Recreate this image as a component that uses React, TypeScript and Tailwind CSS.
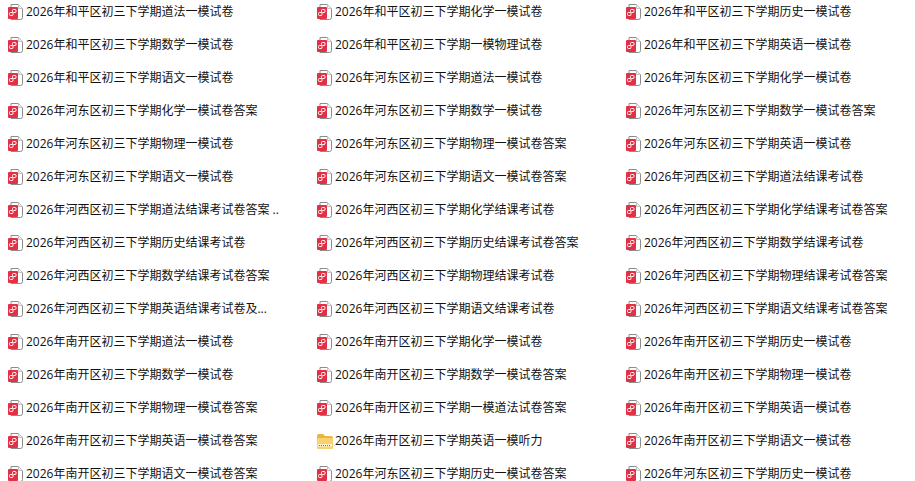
const rows: string[][] = [
  ["2026年和平区初三下学期道法一模试卷", "2026年和平区初三下学期化学一模试卷", "2026年和平区初三下学期历史一模试卷"],
  ["2026年和平区初三下学期数学一模试卷", "2026年和平区初三下学期一模物理试卷", "2026年和平区初三下学期英语一模试卷"],
  ["2026年和平区初三下学期语文一模试卷", "2026年河东区初三下学期道法一模试卷", "2026年河东区初三下学期化学一模试卷"],
  ["2026年河东区初三下学期化学一模试卷答案", "2026年河东区初三下学期数学一模试卷", "2026年河东区初三下学期数学一模试卷答案"],
  ["2026年河东区初三下学期物理一模试卷", "2026年河东区初三下学期物理一模试卷答案", "2026年河东区初三下学期英语一模试卷"],
  ["2026年河东区初三下学期语文一模试卷", "2026年河东区初三下学期语文一模试卷答案", "2026年河西区初三下学期道法结课考试卷"],
  ["2026年河西区初三下学期道法结课考试卷答案 ..", "2026年河西区初三下学期化学结课考试卷", "2026年河西区初三下学期化学结课考试卷答案"],
  ["2026年河西区初三下学期历史结课考试卷", "2026年河西区初三下学期历史结课考试卷答案", "2026年河西区初三下学期数学结课考试卷"],
  ["2026年河西区初三下学期数学结课考试卷答案", "2026年河西区初三下学期物理结课考试卷", "2026年河西区初三下学期物理结课考试卷答案"],
  ["2026年河西区初三下学期英语结课考试卷及...", "2026年河西区初三下学期语文结课考试卷", "2026年河西区初三下学期语文结课考试卷答案"],
  ["2026年南开区初三下学期道法一模试卷", "2026年南开区初三下学期化学一模试卷", "2026年南开区初三下学期历史一模试卷"],
  ["2026年南开区初三下学期数学一模试卷", "2026年南开区初三下学期数学一模试卷答案", "2026年南开区初三下学期物理一模试卷"],
  ["2026年南开区初三下学期物理一模试卷答案", "2026年南开区初三下学期一模道法试卷答案", "2026年南开区初三下学期英语一模试卷"],
  ["2026年南开区初三下学期英语一模试卷答案", "2026年南开区初三下学期英语一模听力", "2026年南开区初三下学期语文一模试卷"],
  ["2026年南开区初三下学期语文一模试卷答案", "2026年河东区初三下学期历史一模试卷答案", "2026年河东区初三下学期历史一模试卷"],
];

const PdfIcon = () => (
  <svg width="16" height="16" viewBox="0 0 16 16" className="block shrink-0">
    {/* sheet */}
    <path d="M4 .5H11.5L15.5 4.5V13.5Q15.5 15.5 13.5 15.5H4Z" fill="#fff" stroke="#8c8c8c" />
    <path d="M11.5 .5V4.5H15.5" fill="#f2f2f2" stroke="#c4c4c4" />
    {/* red tag */}
    <rect x="1" y="3" width="10" height="12" rx="1" fill="#e23145" />
    <rect x="5.5" y="5.5" width="3.5" height="3" rx="1" fill="none" stroke="#fff" />
    <rect x="2.5" y="8.5" width="3.5" height="3" rx="1" fill="none" stroke="#fff" />
  </svg>
);

const ZipIcon = () => (
  <svg width="16" height="15" viewBox="0 0 16 15" className="mt-px ml-px block shrink-0">
    <path d="M0 2Q0 0 2 0H6L8 2H14Q16 2 16 4V13Q16 15 14 15H2Q0 15 0 13Z" fill="#eeb43e" />
    <rect x="0" y="4" width="16" height="11" rx="1" fill="#f7d271" />
    <rect x="1" y="10" width="14" height="2.5" fill="#fdf3cf" />
    <path d="M2 11.5H14" stroke="#77776a" strokeDasharray="1 1" />
  </svg>
);

export default function App() {
  return (
    <div className="h-[481px] w-[915px] overflow-hidden bg-white pl-[7px] pt-[4px] text-[12px] leading-[16px] text-[#111] [font-family:'Open_Sans','Noto_Sans_CJK_SC',sans-serif]">
      <div className="flex flex-col gap-[16px]">
        {rows.map((row, i) => (
          <div key={i} className="flex h-[17px]">
            {row.map((name) => {
              const isZip = name.endsWith("听力");
              return (
                <div key={name} className="flex w-[309px] shrink-0 items-start">
                  {isZip ? <ZipIcon /> : <PdfIcon />}
                  <span className={isZip ? "ml-[2px] whitespace-nowrap" : "ml-[3px] whitespace-nowrap"}>{name}</span>
                </div>
              );
            })}
          </div>
        ))}
      </div>
    </div>
  );
}
